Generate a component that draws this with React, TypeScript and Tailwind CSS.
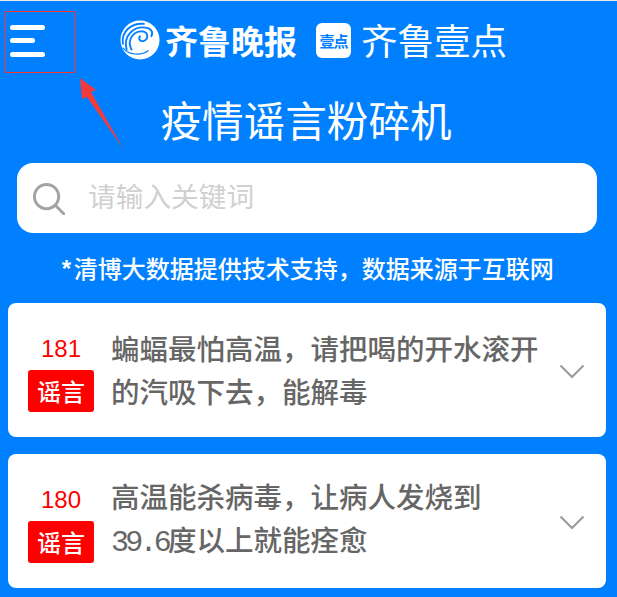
const cjk = { fontFamily: '"Noto Sans CJK SC", sans-serif' };

function Swirl() {
  return (
    <svg width="40" height="40" viewBox="0 0 42 42" className="shrink-0">
      <circle cx="21" cy="21" r="20.5" fill="#fff" />
      <path d="M3 25C1 12 12 3 25 4" fill="none" stroke="#0080ff" strokeWidth="2" strokeLinecap="round" />
      <path d="M7 31C3 17 14 6 27 8C33 9 35 13 33 17" fill="none" stroke="#0080ff" strokeWidth="2" strokeLinecap="round" />
      <path d="M12 31C7 21 14 11 24 12C30 13 30 20 25 22C21 23 19 20 21 17" fill="none" stroke="#0080ff" strokeWidth="2" strokeLinecap="round" />
      <path d="M3 29C9 37 22 38 30 32" fill="none" stroke="#0080ff" strokeWidth="1.2" />
    </svg>
  );
}

function Item({ n, first, second }: { n: number; first: string; second: React.ReactNode }) {
  return (
    <div className="flex h-[134px] items-center rounded-lg bg-white pl-5 pr-[21px]">
      <div className="flex w-[66px] shrink-0 flex-col items-center gap-[6px] pt-[6px]">
        <span className="text-[24px] leading-[30px] text-[#ff0000]" style={{ fontFamily: '"Liberation Sans", sans-serif' }}>{n}</span>
        <span className="flex h-[42px] w-[66px] items-center justify-center rounded-[3px] bg-[#ff0000] text-[24px] font-medium leading-none text-white">谣言</span>
      </div>
      <div className="mb-[3px] ml-[17px] flex-1 text-[28.5px] font-medium leading-[43px] text-[#666666]">
        <div>{first}</div>
        <div>{second}</div>
      </div>
      <svg width="26" height="15" viewBox="0 0 26 15" fill="none" stroke="#9a9a9a" strokeWidth="2" className="mt-[3px] shrink-0">
        <path d="M1.5 1.5L13 13L24.5 1.5" />
      </svg>
    </div>
  );
}

export default function App() {
  return (
    <div className="relative h-[597px] w-[617px] overflow-hidden border-t border-[#e8e8e8] bg-[#0080ff]" style={cjk}>
      <header className="flex h-[72px] items-center pt-[6px]">
        <div className="ml-[10px] mt-[1px] flex h-[32px] w-[35px] flex-col justify-between">
          <span className="h-[5px] w-[35px] rounded-full bg-white" />
          <span className="h-[5px] w-[25px] rounded-full bg-white" />
          <span className="h-[5px] w-[35px] rounded-full bg-white" />
        </div>
        <div className="ml-[75px] flex items-center">
          <Swirl />
          <span className="ml-[5px] text-[33px] font-bold leading-none text-white">齐鲁晚报</span>
          <span className="ml-[19px] flex h-[35px] w-[35px] items-center justify-center rounded-[6px] bg-white text-[15px] font-bold leading-none tracking-[-1px] text-[#0080ff]">壹点</span>
          <span className="ml-[10px] text-[36.5px] leading-none text-white">齐鲁壹点</span>
        </div>
      </header>
      <h1 className="mt-[21px] pr-[5px] text-center text-[41.6px] font-normal leading-[50px] text-white">疫情谣言粉碎机</h1>
      <div className="mx-[17px] mt-[19px] flex h-[70px] w-[580px] items-center rounded-2xl bg-white pl-[15px]">
        <svg width="33" height="33" viewBox="0 0 34 34" fill="none" stroke="#a3a3a3" strokeWidth="3" className="shrink-0">
          <circle cx="15" cy="15" r="12.5" />
          <path d="M24 24L33 33" strokeLinecap="round" />
        </svg>
        <span className="mb-[4px] ml-[23px] text-[27.7px] leading-none text-[#d0d0d0]">请输入关键词</span>
      </div>
      <p className="mt-[17px] pr-[4px] text-center text-[24px] font-medium leading-[36px] text-white">
        <span style={{ fontFamily: '"Liberation Mono", monospace' }} className="font-bold">*</span>清博大数据提供技术支持，数据来源于互联网
      </p>
      <div className="ml-2 mt-[13px] flex w-[598px] flex-col gap-[17px]">
        <Item n={181} first="蝙蝠最怕高温，请把喝的开水滚开" second="的汽吸下去，能解毒" />
        <Item
          n={180}
          first="高温能杀病毒，让病人发烧到"
          second={
            <>
              <span className="text-[30px] font-normal tracking-[-3.75px]" style={{ fontFamily: '"Liberation Mono", monospace' }}>39.6</span>度以上就能痊愈
            </>
          }
        />
      </div>
      <div className="absolute left-[5px] top-[10px] h-[62px] w-[70px] border border-[#ff3333]" />
      <svg className="absolute left-[78px] top-[76px]" width="48" height="75" viewBox="0 0 48 75">
        <path d="M2 1L18 13L13 15L46 73L9 20L4 22Z" fill="#f43b3b" />
      </svg>
    </div>
  );
}
